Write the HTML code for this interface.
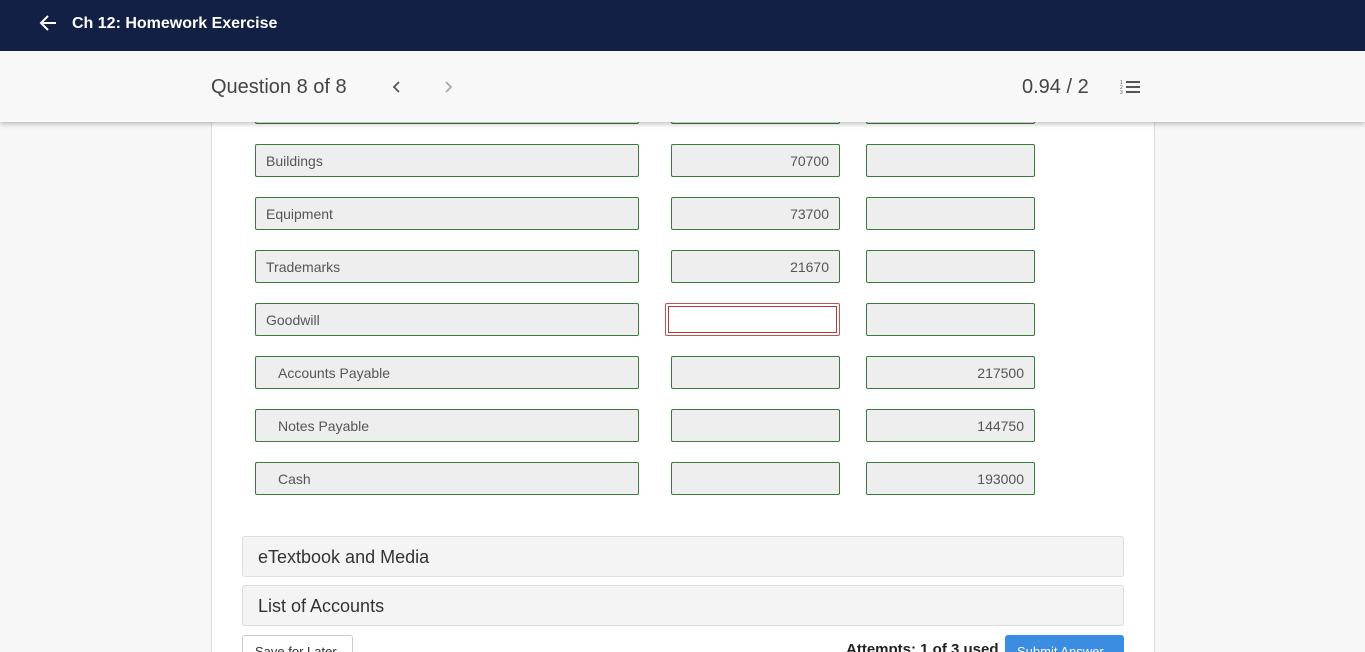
<!DOCTYPE html>
<html style="width:1365px;height:652px;overflow:hidden"><head><style>
*{box-sizing:border-box;margin:0;padding:0}
body{width:1365px;height:652px;overflow:hidden;background:#f7f7f7;font-family:"Liberation Sans",sans-serif;position:relative}
.top{position:absolute;left:0;top:0;width:1365px;height:51px;background:#132046;color:#fff}
.top .t{position:absolute;left:72px;top:15px;font-size:16px;font-weight:bold}
.bar{position:absolute;left:0;top:51px;width:1365px;height:71px;background:#f8f8f8;box-shadow:0 2px 5px rgba(0,0,0,.25);z-index:5}
.q{position:absolute;left:211px;font-size:20px;color:#444}
.sc{position:absolute;left:1022px;font-size:20px;color:#444}
.panel{position:absolute;left:211px;top:100px;width:944px;height:552px;background:#fff;border-left:1px solid #ddd;border-right:1px solid #ddd}
.f{position:absolute;height:33px;background:#eee;border:1px solid #3a7a3a;border-radius:2px;font-size:14px;color:#555;line-height:33px;padding:0 10px}
.r{text-align:right}
.acc{position:absolute;left:242px;width:882px;height:41px;background:#f4f4f4;border:1px solid #ddd;border-radius:3px;font-size:18px;color:#333;line-height:40px;padding-left:15px}
</style></head><body>
<div class="top">
<svg style="position:absolute;left:38px;top:13px" width="20" height="20" viewBox="0 0 20 20"><path d="M18 10H3M10 3L3 10l7 7" stroke="#fff" stroke-width="2" fill="none"/></svg>
<div class="t">Ch 12: Homework Exercise</div></div>
<div class="bar">
<div class="q" style="top:25px">Question 8 of 8</div>
<svg style="position:absolute;left:391px;top:29px" width="12" height="14"><path d="M8 2L3 7l5 5" stroke="#555" stroke-width="1.8" fill="none"/></svg>
<svg style="position:absolute;left:443px;top:29px" width="12" height="14"><path d="M3 2l5 5-5 5" stroke="#aaa" stroke-width="1.8" fill="none"/></svg>
<div class="sc" style="top:25px">0.94 / 2</div>
<svg style="position:absolute;left:1120px;top:27px" width="22" height="18"><text x="0" y="6" font-size="5" fill="#555">1</text><text x="0" y="11" font-size="5" fill="#555">2</text><text x="0" y="16" font-size="5" fill="#555">3</text><path d="M6 4h14M6 9h14M6 14h14" stroke="#555" stroke-width="2"/></svg>
</div>
<div class="panel"></div>
<div class="f" style="left:255px;top:91px;width:384px"></div>
<div class="f" style="left:671px;top:91px;width:169px"></div>
<div class="f" style="left:866px;top:91px;width:169px"></div>

<div class="f" style="left:255px;top:144px;width:384px">Buildings</div>
<div class="f r" style="left:671px;top:144px;width:169px">70700</div>
<div class="f" style="left:866px;top:144px;width:169px"></div>
<div class="f" style="left:255px;top:197px;width:384px">Equipment</div>
<div class="f r" style="left:671px;top:197px;width:169px">73700</div>
<div class="f" style="left:866px;top:197px;width:169px"></div>
<div class="f" style="left:255px;top:250px;width:384px">Trademarks</div>
<div class="f r" style="left:671px;top:250px;width:169px">21670</div>
<div class="f" style="left:866px;top:250px;width:169px"></div>
<div class="f" style="left:255px;top:303px;width:384px">Goodwill</div>
<div style="position:absolute;left:665px;top:303px;width:175px;height:33px;border:1px solid #b55;border-radius:2px;background:#fff;padding:2px"><div style="width:100%;height:100%;border:1px solid #b33"></div></div>
<div class="f" style="left:866px;top:303px;width:169px"></div>
<div class="f" style="left:255px;top:356px;width:384px;padding-left:22px">Accounts Payable</div>
<div class="f" style="left:671px;top:356px;width:169px"></div>
<div class="f r" style="left:866px;top:356px;width:169px">217500</div>
<div class="f" style="left:255px;top:409px;width:384px;padding-left:22px">Notes Payable</div>
<div class="f" style="left:671px;top:409px;width:169px"></div>
<div class="f r" style="left:866px;top:409px;width:169px">144750</div>
<div class="f" style="left:255px;top:462px;width:384px;padding-left:22px">Cash</div>
<div class="f" style="left:671px;top:462px;width:169px"></div>
<div class="f r" style="left:866px;top:462px;width:169px">193000</div>

<div class="acc" style="top:536px">eTextbook and Media</div>
<div class="acc" style="top:585px">List of Accounts</div>
<div style="position:absolute;left:242px;top:635px;width:111px;height:17px;border:1px solid #ccc;border-bottom:none;border-radius:3px 3px 0 0;background:#fff;font-size:13px;color:#333;padding:9px 12px;overflow:hidden;line-height:13px">Save for Later</div>
<div style="position:absolute;left:846px;top:641px;height:11px;overflow:hidden;font-size:15px;font-weight:bold;color:#222;line-height:17px">Attempts: 1 of 3 used</div>
<div style="position:absolute;left:1005px;top:635px;width:119px;height:17px;background:#3a8de0;border-radius:3px 3px 0 0;color:#fff;font-size:13px;padding:10px 12px;overflow:hidden;line-height:13px">Submit Answer</div>
</body></html>
